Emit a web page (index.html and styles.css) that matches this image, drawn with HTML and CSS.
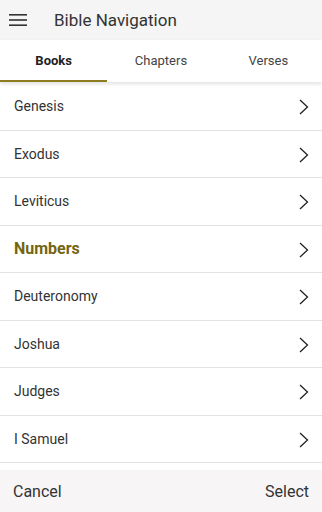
FILE: index.html
```html
<!DOCTYPE html>
<html lang="en">
<head>
    <meta charset="UTF-8">
    <meta name="viewport" content="width=device-width, initial-scale=1.0">
    <title>Bible Navigation</title>
    <link rel="stylesheet" href="styles.css">
</head>
<body>
    <!-- Top Bar -->
    <div class="top-bar">
        <svg class="menu-icon" width="18" height="12" viewBox="0 0 18 12">
            <rect x="0" y="0" width="18" height="1.6" fill="#333"/>
            <rect x="0" y="5.2" width="18" height="1.6" fill="#333"/>
            <rect x="0" y="10.4" width="18" height="1.6" fill="#333"/>
        </svg>
        <div class="title">Bible Navigation</div>
    </div>

    <!-- Tabs -->
    <div class="tabs">
        <div class="tab active">Books</div>
        <div class="tab">Chapters</div>
        <div class="tab">Verses</div>
    </div>

    <!-- Book List -->
    <div class="list">
        <div class="row"><span>Genesis</span><svg class="chevron" width="10" height="16" viewBox="0 0 10 16"><path d="M1 1 L8.5 8 L1 15" fill="none" stroke="#222" stroke-width="1.3"/></svg></div>
        <div class="row"><span>Exodus</span><svg class="chevron" width="10" height="16" viewBox="0 0 10 16"><path d="M1 1 L8.5 8 L1 15" fill="none" stroke="#222" stroke-width="1.3"/></svg></div>
        <div class="row"><span>Leviticus</span><svg class="chevron" width="10" height="16" viewBox="0 0 10 16"><path d="M1 1 L8.5 8 L1 15" fill="none" stroke="#222" stroke-width="1.3"/></svg></div>
        <div class="row selected"><span>Numbers</span><svg class="chevron" width="10" height="16" viewBox="0 0 10 16"><path d="M1 1 L8.5 8 L1 15" fill="none" stroke="#222" stroke-width="1.3"/></svg></div>
        <div class="row"><span>Deuteronomy</span><svg class="chevron" width="10" height="16" viewBox="0 0 10 16"><path d="M1 1 L8.5 8 L1 15" fill="none" stroke="#222" stroke-width="1.3"/></svg></div>
        <div class="row"><span>Joshua</span><svg class="chevron" width="10" height="16" viewBox="0 0 10 16"><path d="M1 1 L8.5 8 L1 15" fill="none" stroke="#222" stroke-width="1.3"/></svg></div>
        <div class="row"><span>Judges</span><svg class="chevron" width="10" height="16" viewBox="0 0 10 16"><path d="M1 1 L8.5 8 L1 15" fill="none" stroke="#222" stroke-width="1.3"/></svg></div>
        <div class="row"><span>I Samuel</span><svg class="chevron" width="10" height="16" viewBox="0 0 10 16"><path d="M1 1 L8.5 8 L1 15" fill="none" stroke="#222" stroke-width="1.3"/></svg></div>
    </div>

    <!-- Bottom Bar -->
    <div class="bottom-bar">
        <div class="action">Cancel</div>
        <div class="action">Select</div>
    </div>
</body>
</html>
```

FILE: styles.css
```css
html, body {
    height: 100%;
}
body {
    margin: 0;
    font-family: Roboto, "Liberation Sans", sans-serif;
    background-color: #fff;
    color: #333;
    display: flex;
    flex-direction: column;
    overflow: hidden;
}
.top-bar {
    height: 40px;
    flex: 0 0 40px;
    background-color: #f5f5f5;
    display: flex;
    align-items: center;
    padding-left: 9px;
}
.menu-icon {
    margin-right: 27px;
}
.title {
    font-size: 17px;
    color: #333;
}
.tabs {
    flex: 0 0 42px;
    display: flex;
    background-color: #fff;
    box-shadow: 0 2px 4px rgba(0, 0, 0, 0.12);
    position: relative;
    z-index: 2;
}
.tab {
    flex: 1;
    display: flex;
    align-items: center;
    justify-content: center;
    font-size: 13px;
    color: #444;
    border-bottom: 2px solid transparent;
}
.tab.active {
    font-weight: bold;
    color: #222;
    border-bottom-color: #8c7b1f;
}
.list {
    flex: 1;
    overflow: hidden;
    padding-top: 1px;
}
.row {
    height: 47.5px;
    box-sizing: border-box;
    border-bottom: 1px solid #e2e2e2;
    display: flex;
    align-items: center;
    justify-content: space-between;
    padding: 0 13px 0 14px;
    font-size: 14px;
    color: #333;
}
.row.selected {
    font-size: 16px;
    font-weight: bold;
    color: #75650f;
}
.chevron {
    margin-top: 2px;
}
.bottom-bar {
    flex: 0 0 42px;
    background-color: #f7f5f6;
    display: flex;
    align-items: center;
    justify-content: space-between;
    padding: 0 13px;
    font-size: 16px;
    color: #333;
}
```
